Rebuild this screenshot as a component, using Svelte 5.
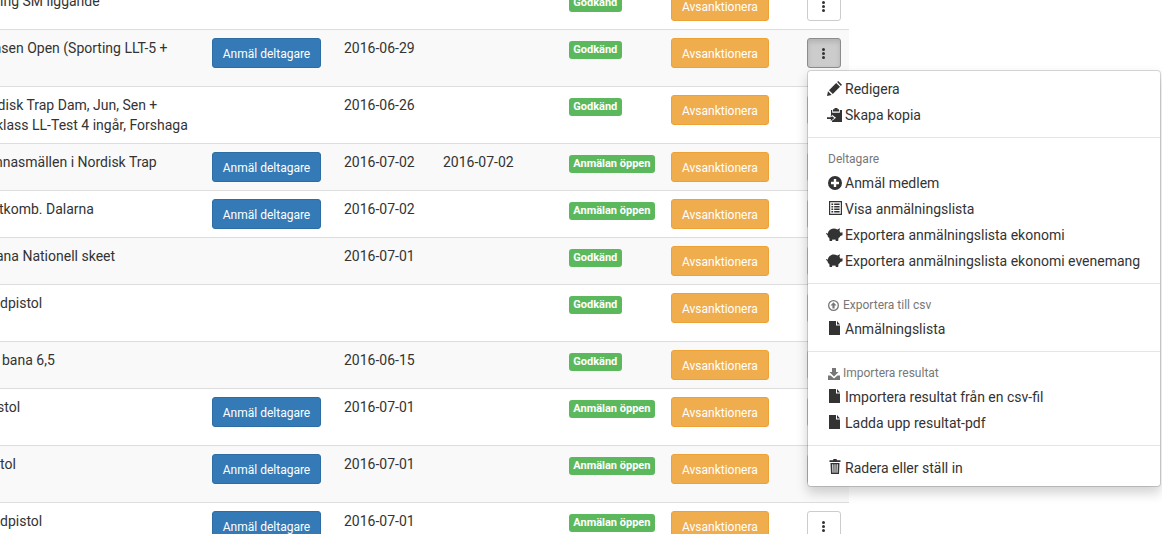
<script>
  const rows = [
    { lines: ['ing SM liggande'], x: 0, status: 'Godkänd' },
    { lines: ['nasen Open (Sporting LLT-5 +'], x: -14, signup: true, date: '2016-06-29', status: 'Godkänd', tall: true, open: true },
    { lines: ['rdisk Trap Dam, Jun, Sen +', 'klass LL-Test 4 ingår, Forshaga'], x: -7, x2: -4, date: '2016-06-26', status: 'Godkänd', tall: true },
    { lines: ['nnasmällen i Nordisk Trap'], x: -5, signup: true, date: '2016-07-02', date2: '2016-07-02', status: 'Anmälan öppen' },
    { lines: ['tkomb. Dalarna'], x: -1, signup: true, date: '2016-07-02', status: 'Anmälan öppen' },
    { lines: ['ana Nationell skeet'], x: -4, date: '2016-07-01', status: 'Godkänd' },
    { lines: ['dpistol'], x: 0, status: 'Godkänd', tall: true },
    { lines: ['bana 6,5'], x: 2, date: '2016-06-15', status: 'Godkänd' },
    { lines: ['stol'], x: -3, signup: true, date: '2016-07-01', status: 'Anmälan öppen', tall: true },
    { lines: ['tol'], x: 0, signup: true, date: '2016-07-01', status: 'Anmälan öppen', tall: true },
    { lines: ['dpistol'], x: 0, signup: true, date: '2016-07-01', status: 'Anmälan öppen', tall: true }
  ];

  const icons = {
    pencil: 'M0 15l1-4.700L4.700 14zM2 9.200L9.200 2 13 5.800 5.800 13zM10.100 1.100L11.200 0 15 3.800 13.900 4.900z',
    copy: 'M7.500 0h3v1.200H12v2.300H6V1.200h1.500zM4 2h1.200v2.800h7.600V2H15v12H5v-1.300L9 9.700 5 6.700v2H4zM0 9.300h3.800V7.300l3.500 2.800L3.800 13v-1.900H0z',
    plus: 'M7 0a7 7 0 1 0 0 14A7 7 0 0 0 7 0zM5.800 3h2.400v2.800H11v2.400H8.200V11H5.800V8.200H3V5.800h2.800z',
    list: 'M0 0h13v14H0zM1.200 1.200v11.600h10.600V1.200zM2.400 2.500h1.800v1.500H2.400zM5.200 2.500h5.400v1.500H5.200zM2.400 5h1.800v1.500H2.400zM5.200 5h5.400v1.500H5.200zM2.400 7.500h1.800V9H2.400zM5.200 7.500h5.400V9H5.200zM2.400 10h1.800v1.500H2.400zM5.200 10h5.400v1.500H5.200z',
    pig: 'M7.500 .5c1.500 0 2.800.4 3.800 1L14 .3l-.6 2.700c.5.500.9 1.100 1.100 1.700l2-.4v3l-2.100.7c-.4.900-1 1.600-1.900 2.100L12.200 13H9.800l-.4-1.500c-1 .2-2.100.2-3 0L6 13H3.600l-.3-2.900C2.200 9.300 1.600 8.200 1.500 7 .8 6.800.2 6.200 0 5.300l.9-.4c.1.400.4.700.8.800C2.300 2.600 4.600.5 7.500.5z',
    arrowUp: 'M5.500 0a5.500 5.500 0 1 0 0 11 5.500 5.500 0 0 0 0-11zM5.500 1.300a4.200 4.200 0 1 1 0 8.400 4.200 4.200 0 0 1 0-8.400zM5.500 2.200L2.500 5.400h1.900v3h2.200v-3h1.900z',
    file: 'M0 0h7v4.500h4V14H0zM8 0l3 3.500H8z',
    importIcon: 'M4 0h4v4h2.500L6 8.500 1.500 4H4zM0 7.500h2.500L6 10.500l3.500-3H12V12H0z',
    trash: 'M4.500 0h3l.5 1.200h3.500v1.800H.5V1.200H4zM1.500 4h9l-.5 11H2zM3.200 5.200l.3 8.600h1l-.2-8.600zM5.500 5.200v8.600h1V5.200zM7.700 5.200l-.2 8.600h1l.3-8.600z'
  };

  const sizes = { pencil: [15, 15], copy: [15, 14], list: [13, 14], pig: [17, 14], arrowUp: [11, 11], importIcon: [12, 12], file: [11, 14], trash: [12, 15] };

  const sections = [
    { items: [{ icon: 'pencil', text: 'Redigera' }, { icon: 'copy', text: 'Skapa kopia' }] },
    {
      header: 'Deltagare',
      items: [
        { icon: 'plus', text: 'Anmäl medlem' },
        { icon: 'list', text: 'Visa anmälningslista' },
        { icon: 'pig', text: 'Exportera anmälningslista ekonomi' },
        { icon: 'pig', text: 'Exportera anmälningslista ekonomi evenemang' }
      ]
    },
    { header: 'Exportera till csv', headerIcon: 'arrowUp', items: [{ icon: 'file', text: 'Anmälningslista' }] },
    {
      header: 'Importera resultat',
      headerIcon: 'importIcon',
      items: [
        { icon: 'file', text: 'Importera resultat från en csv-fil' },
        { icon: 'file', text: 'Ladda upp resultat-pdf' }
      ]
    },
    { items: [{ icon: 'trash', text: 'Radera eller ställ in' }] }
  ];
</script>

{#snippet icon(name)}
  {@const size = sizes[name] ?? [14, 14]}
  <svg class="icon icon-{name}" width={size[0]} height={size[1]} viewBox="0 0 {size[0]} {size[1]}" aria-hidden="true">
    <path fill-rule="evenodd" d={icons[name]} />
  </svg>
{/snippet}

<div class="page">
  <table>
    <colgroup>
      <col class="c-name" /><col class="c-signup" /><col class="c-date" /><col class="c-date2" />
      <col class="c-status" /><col class="c-action" /><col class="c-menu" />
    </colgroup>
    <tbody>
      {#each rows as row, i}
        <tr class:striped={i % 2 === 1}>
          <td class="name" class:tall={row.tall}>
            {#each row.lines as line, l}
              <div style="margin-left: {l === 1 ? row.x2 : row.x}px">{line}</div>
            {/each}
          </td>
          <td>
            {#if row.signup}
              <button class="btn primary">Anmäl deltagare</button>
            {/if}
          </td>
          <td>{row.date ?? ''}</td>
          <td>{row.date2 ?? ''}</td>
          <td><span class="label">{row.status}</span></td>
          <td><button class="btn warning">Avsanktionera</button></td>
          <td>
            <div class="dropdown">
              <button class="btn more" class:active={row.open} aria-label="Mer">
                <svg width="3" height="11" viewBox="0 0 3 11" aria-hidden="true">
                  <circle cx="1.500" cy="1.500" r="1.500" /><circle cx="1.500" cy="5.500" r="1.500" /><circle cx="1.500" cy="9.500" r="1.500" />
                </svg>
              </button>
              {#if row.open}
                <ul class="menu">
                  {#each sections as section, s}
                    {#if s > 0}<li class="divider"></li>{/if}
                    {#if section.header}
                      <li class="header">
                        {#if section.headerIcon}{@render icon(section.headerIcon)}{/if}{section.header}
                      </li>
                    {/if}
                    {#each section.items as item}
                      <li class="item"><span class="slot">{@render icon(item.icon)}</span>{item.text}</li>
                    {/each}
                  {/each}
                </ul>
              {/if}
            </div>
          </td>
        </tr>
      {/each}
    </tbody>
  </table>
</div>

<style>
  :global(body) {
    overflow: hidden;
    background: #fff;
  }

  .page {
    font-family: Roboto, "Liberation Sans", sans-serif;
    font-size: 14px;
    line-height: 20px;
    color: #333;
    height: 534px;
    overflow: hidden;
  }

  table {
    width: 849px;
    margin-top: -18px;
    table-layout: fixed;
    border-collapse: separate;
    border-spacing: 0;
  }

  .c-name { width: 204px; }
  .c-signup { width: 132px; }
  .c-date { width: 99px; }
  .c-date2 { width: 126px; }
  .c-status { width: 102px; }
  .c-action { width: 136px; }
  .c-menu { width: 50px; }

  td {
    padding: 8px;
    border-top: 1px solid #ddd;
    vertical-align: top;
    white-space: nowrap;
  }

  td.name {
    padding-left: 0;
    height: 30px;
  }

  td.name.tall {
    height: 40px;
  }

  tr.striped td {
    background: #f9f9f9;
  }

  .btn {
    display: block;
    height: 30px;
    padding: 2px 10px 0;
    font-family: inherit;
    font-size: 12px;
    line-height: 26px;
    border: 1px solid transparent;
    border-radius: 3px;
    color: #fff;
  }

  .primary {
    width: 109px;
    padding-left: 0;
    padding-right: 0;
    background: #337ab7;
    border-color: #2e6da4;
  }

  .warning {
    background: #f0ad4e;
    border-color: #eea236;
  }

  .more {
    width: 34px;
    padding: 0 1px 0 0;
    background: #fff;
    border-color: #ccc;
    display: flex;
    align-items: center;
    justify-content: center;
  }

  .more svg {
    fill: #333;
  }

  .more.active {
    background: #ccc;
    border-color: #8c8c8c;
    box-shadow: inset 0 3px 5px rgba(0, 0, 0, 0.125);
  }

  .label {
    display: inline-block;
    margin-top: 3px;
    padding: 3px 4.250px 4px;
    font-size: 11px;
    font-weight: 700;
    line-height: 11px;
    color: #fff;
    background: #5cb85c;
    border-radius: 3px;
    vertical-align: top;
  }

  .dropdown {
    position: relative;
    width: 34px;
  }

  .menu {
    position: absolute;
    top: 100%;
    left: 0;
    z-index: 10;
    margin: 2px 0 0;
    padding: 5px 0;
    list-style: none;
    background: #fff;
    border: 1px solid rgba(0, 0, 0, 0.15);
    border-radius: 4px;
    box-shadow: 0 6px 12px rgba(0, 0, 0, 0.175);
    background-clip: padding-box;
  }

  .divider {
    height: 1px;
    margin: 9px 0;
    background: #e5e5e5;
  }

  .header {
    padding: 4px 20px 2px;
    font-size: 12px;
    line-height: 17px;
    color: #777;
    display: flex;
    align-items: center;
  }

  .header .icon {
    fill: #777;
    margin-right: 4px;
  }

  .header .icon-importIcon {
    margin-right: 3px;
  }

  .item {
    padding: 3px 20px;
    display: flex;
    align-items: center;
    color: #333;
  }

  .slot {
    width: 17px;
    height: 20px;
    flex: none;
    display: flex;
    align-items: center;
  }

  .slot .icon {
    fill: #333;
    flex: none;
  }

  .icon-pig {
    margin: 0 -1px 1px -2px;
  }

  .icon-pencil,
  .icon-copy {
    margin-left: -1px;
  }

  .icon-pencil {
    margin-bottom: 2px;
  }

  .icon-list {
    margin: 0 0 2px 1px;
  }

  .icon-file {
    margin: 0 0 2px 1px;
  }

  .icon-trash {
    margin: 0 0 3px 1px;
  }
</style>
